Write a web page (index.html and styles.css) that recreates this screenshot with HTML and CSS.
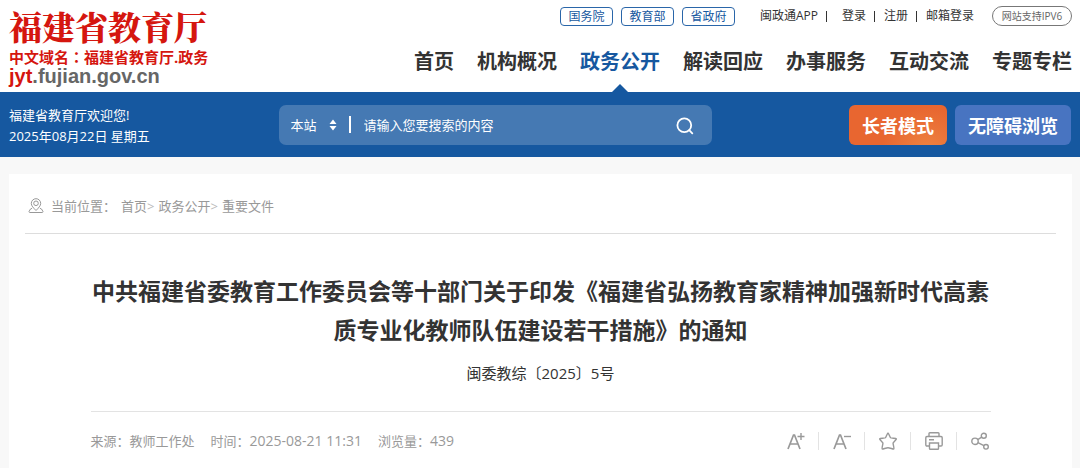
FILE: index.html
```
<!DOCTYPE html>
<html lang="zh-CN">
<head>
    <meta charset="UTF-8">
    <meta name="viewport" content="width=device-width, initial-scale=1.0">
    <title>福建省教育厅</title>
    <link rel="stylesheet" href="styles.css">
</head>
<body>
    <header class="header">
        <a href="#" class="logo">
            <span class="logo-name">福建省教育厅</span>
            <span class="logo-domain">中文域名<span lang="zh-TW">：</span>福建省教育厅.政务</span>
            <span class="logo-url"><em>jyt</em>.fujian.gov.cn</span>
        </a>

        <div class="header-right">
            <div class="top-links">
                <div class="gov-links">
                    <a href="#">国务院</a>
                    <a href="#">教育部</a>
                    <a href="#">省政府</a>
                </div>
                <div class="user-links">
                    <a href="#" class="app-link">闽政通APP</a>
                    <a href="#">登录</a>
                    <a href="#">注册</a>
                    <a href="#">邮箱登录</a>
                </div>
                <span class="ipv6">网站支持IPV6</span>
            </div>

            <nav class="nav">
                <a href="#">首页</a>
                <a href="#">机构概况</a>
                <a href="#" class="active">政务公开</a>
                <a href="#">解读回应</a>
                <a href="#">办事服务</a>
                <a href="#">互动交流</a>
                <a href="#">专题专栏</a>
            </nav>
        </div>
    </header>

    <!-- Welcome and search bar -->
    <div class="search-bar">
        <div class="welcome">
            <p>福建省教育厅欢迎您!</p>
            <p>2025年08月22日 星期五</p>
        </div>

        <form class="search-form">
            <select class="search-scope" aria-label="搜索范围">
                <option>本站</option>
            </select>
            <svg class="scope-arrow" width="8" height="12" viewBox="0 0 8 12" fill="#fff">
                <path d="M4 0.5 7.5 5h-7zM4 11.500.5 7h7z"/>
            </svg>
            <input type="text" class="search-input" placeholder="请输入您要搜索的内容" aria-label="搜索内容">
            <button type="submit" class="search-btn" aria-label="搜索">
                <svg width="18" height="18" viewBox="0 0 18 18" fill="none" stroke="#fff" stroke-width="1.8" stroke-linecap="round">
                    <circle cx="8.300" cy="8.300" r="6.900"/>
                    <path d="M13.200 13.200 16.300 16.300"/>
                </svg>
            </button>
        </form>

        <div class="mode-btns">
            <button type="button" class="mode-btn elder">长者模式</button>
            <button type="button" class="mode-btn barrier">无障碍浏览</button>
        </div>
    </div>

    <main class="content">
        <div class="breadcrumb">
            <svg width="16" height="16" viewBox="0 0 16 16" fill="none" stroke="#999" stroke-width="1">
                <path d="M8 12.500C5.500 10 3.300 7.800 3.300 5.400a4.700 4.700 0 0 1 9.400 0C12.700 7.800 10.500 10 8 12.500z"/>
                <circle cx="8" cy="5.300" r="2.300"/>
                <path d="M4 10.300 2.500 11 1 13.500Q1 14.500 2 14.500h12Q15 14.500 15 13.500L13.500 11 12 10.300"/>
            </svg>
            <span class="crumb-label">当前位置：</span>
            <a href="#">首页</a><i>&gt;</i>
            <a href="#">政务公开</a><i>&gt;</i>
            <a href="#">重要文件</a>
        </div>

        <article class="article">
            <h1>中共福建省委教育工作委员会等十部门关于印发《福建省弘扬教育家精神加强新时代高素质专业化教师队伍建设若干措施》的通知</h1>
            <p class="doc-number">闽委教综〔2025〕5号</p>

            <div class="article-info">
                <div class="meta">
                    <span>来源：教师工作处</span>
                    <span>时间：<span class="num">2025-08-21 11:31</span></span>
                    <span>浏览量：<span class="num">439</span></span>
                </div>
                <div class="tools">
                    <button type="button" aria-label="放大字体">
                        <svg viewBox="0 0 18 18">
                            <path d="M1 17 6.500 3h1L13 17M3 12h8" stroke-width="1.700"/>
                            <path d="M10.500 4.500h7M14 1v7" stroke-width="1.400"/>
                        </svg>
                    </button>
                    <button type="button" aria-label="缩小字体">
                        <svg viewBox="0 0 18 18">
                            <path d="M1 17 6.500 3h1L13 17M3 12h8" stroke-width="1.700"/>
                            <path d="M11 4.500h7" stroke-width="1.400"/>
                        </svg>
                    </button>
                    <button type="button" aria-label="收藏">
                        <svg viewBox="0 0 18 18">
                            <path d="M9 1c.5 0 2 4.200 2.600 4.800.6.500 5.600.4 5.800 1 .2.700-3 3.200-3.300 4.200-.2 1 1.300 5.500.7 6-.5.400-4-1.300-5.800-1.300S3.700 17.400 3.200 17c-.6-.5.900-5 .7-6C3.600 10 .4 7.500.6 6.800c.2-.6 5.200-.5 5.800-1C7 5.200 8.500 1 9 1z"/>
                        </svg>
                    </button>
                    <button type="button" aria-label="打印">
                        <svg viewBox="0 0 18 18">
                            <path d="M4 4.500V1.600Q4 .8 4.800.8h8.400q.8 0 .8.800v2.900"/>
                            <path d="M4.500 14H2q-1.200 0-1.200-1.200V5.700Q.8 4.500 2 4.500h14q1.200 0 1.200 1.200v7.100Q17.200 14 16 14h-2.500"/>
                            <path d="M4.500 11h9v5.500q0 .8-.8.800H5.300q-.8 0-.8-.8zM4 7.800h5"/>
                        </svg>
                    </button>
                    <button type="button" aria-label="分享">
                        <svg viewBox="0 0 18 18">
                            <circle cx="4" cy="9.300" r="3.200"/>
                            <circle cx="12.800" cy="3.800" r="2.500"/>
                            <circle cx="15" cy="14.800" r="2.300"/>
                            <path d="M6.700 7.600 10.700 5.200M6.900 10.700 12.900 13.700"/>
                        </svg>
                    </button>
                </div>
            </div>
        </article>
    </main>
</body>
</html>
```

FILE: styles.css
```
* {
    margin: 0;
    padding: 0;
    box-sizing: border-box;
}

body {
    background: #f8f8f8;
    color: #333;
    font-family: 'Open Sans', 'Noto Sans CJK SC', sans-serif;
    font-size: 13px;
    line-height: 20px;
}

a {
    color: inherit;
    text-decoration: none;
}

button,
input,
select {
    border: none;
    background: none;
    color: inherit;
    font-family: inherit;
    font-size: inherit;
}

button {
    cursor: pointer;
}

/* Header */
.header {
    display: flex;
    justify-content: space-between;
    height: 92px;
    padding: 0 8px 0 9px;
    background: #fff;
}

.logo {
    display: flex;
    flex-direction: column;
    padding-top: 4px;
    color: #d5160f;
    font-weight: 700;
    white-space: nowrap;
}

.logo-name {
    font-family: 'Noto Serif CJK SC', 'Noto Sans CJK SC', serif;
    font-size: 33px;
    font-weight: 900;
    line-height: 44px;
}

.logo-domain {
    font-size: 15px;
    line-height: 18px;
}

.logo-domain span {
    font-family: 'Noto Sans CJK TC', sans-serif;
}

.logo-url {
    color: #666;
    font-family: 'Liberation Sans', sans-serif;
    font-size: 20px;
    line-height: 20px;
}

.logo-url em {
    color: #d5160f;
    font-style: normal;
}

.header-right {
    display: flex;
    flex-direction: column;
    align-items: flex-end;
    padding-top: 6px;
    white-space: nowrap;
}

.top-links {
    display: flex;
    align-items: center;
    height: 20px;
    font-size: 12px;
}

.gov-links {
    display: flex;
    gap: 8px;
    margin-right: 25px;
}

.gov-links a {
    width: 53px;
    border: 1px solid #2a66a9;
    border-radius: 4px;
    color: #1658a0;
    line-height: 17px;
    text-align: center;
}

.user-links {
    display: flex;
    margin-right: 18px;
}

.user-links a + a {
    display: flex;
    align-items: center;
}

.user-links a + a::before {
    content: "";
    width: 1px;
    height: 11px;
    margin: 0 9px 0 8px;
    background: #333;
}

.user-links .app-link + a::before {
    margin-right: 15px;
}

.ipv6 {
    width: 80px;
    border: 1px solid #777;
    border-radius: 10px;
    color: #666;
    font-size: 10px;
    line-height: 18px;
    text-align: center;
}

.nav {
    display: flex;
    gap: 23px;
    flex: 1;
}

.nav a {
    position: relative;
    padding-top: 21px;
    font-size: 20px;
    font-weight: 700;
    line-height: 30px;
}

.nav .active {
    color: #1658a0;
}

.nav .active::after {
    content: "";
    position: absolute;
    bottom: 0;
    left: 50%;
    margin-left: -8px;
    border: 8px solid transparent;
    border-top: none;
    border-bottom-color: #1658a0;
}

/* Search bar */
.search-bar {
    display: flex;
    align-items: center;
    height: 65px;
    padding: 0 9px;
    background: #1658a0;
    color: #fff;
}

.welcome {
    width: 25%;
    padding-top: 2px;
    line-height: 21px;
    white-space: nowrap;
}

.search-form {
    display: flex;
    align-items: center;
    flex: 0 1 433px;
    height: 40px;
    margin-left: 4px;
    padding: 0 12px;
    border-radius: 7px;
    background: #4579b3;
}

.search-scope {
    appearance: none;
    width: 38px;
    line-height: 20px;
}

.search-input {
    flex: 1;
    min-width: 0;
    height: 17px;
    margin-left: 12px;
    padding-left: 13px;
    border-left: 2px solid #fff;
    outline: none;
}

.search-input::placeholder {
    color: #fff;
    opacity: 1;
}

.search-btn {
    display: flex;
    margin: 3px 6px 0 0;
}

.mode-btns {
    display: flex;
    gap: 8px;
    margin-left: auto;
}

.mode-btn {
    height: 40px;
    padding: 0 13px;
    border-radius: 6px;
    font-size: 18px;
    font-weight: 700;
    white-space: nowrap;
}

.elder {
    background: radial-gradient(circle at 80% 120%, #ee8442, #e86630 50%);
}

.barrier {
    background: #4874c1;
}

/* Article */
.content {
    margin: 17px 8px 0 9px;
    padding: 0 16px;
    background: #fff;
}

.breadcrumb {
    display: flex;
    align-items: center;
    height: 60px;
    padding: 5px 3px 0;
    border-bottom: 1px solid #ddd;
    color: #999;
}

.crumb-label {
    margin: 0 5px 0 7px;
}

.breadcrumb i {
    margin-right: 4px;
    color: #bbb;
    font-style: normal;
}

.article {
    max-width: 900px;
    margin: 0 auto;
    padding-top: 38px;
}

.article h1 {
    font-size: 23px;
    line-height: 39px;
    text-align: center;
}

.doc-number {
    margin-top: 11px;
    font-size: 15px;
    line-height: 24px;
    text-align: center;
}

.article-info {
    display: flex;
    align-items: center;
    justify-content: space-between;
    margin-top: 26px;
    height: 58px;
    border-top: 1px solid #e3e3e3;
    color: #999;
}

.meta {
    display: flex;
    gap: 16px;
}

.meta .num {
    font-size: 14px;
}

.tools {
    display: flex;
    padding-right: 2px;
}

.tools button {
    display: flex;
}

.tools button + button {
    margin-left: 13px;
    padding-left: 14px;
    border-left: 1px solid #e3e3e3;
}

.tools svg {
    width: 18px;
    height: 18px;
    fill: none;
    stroke: #999;
    stroke-width: 1.4;
}
```
